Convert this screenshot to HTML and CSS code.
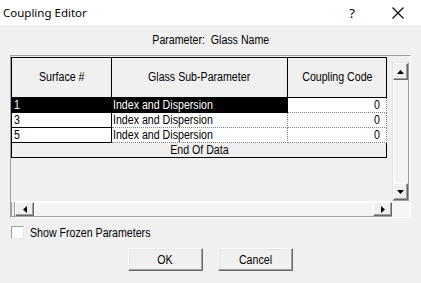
FILE: index.html
```html
<!DOCTYPE html>
<html>
<head>
<meta charset="utf-8">
<link rel="stylesheet" href="styles.css">
</head>
<body>
<div class="titlebar">
  <span class="title">Coupling Editor</span>
  <span class="help">?</span>
  <span class="close"><svg width="12" height="12" viewBox="0 0 12 12"><path d="M0.5 0.5 L11.5 11.5 M11.5 0.5 L0.5 11.5" stroke="#000" stroke-width="1.1" fill="none"/></svg></span>
</div>
<div class="body">
  <div class="param"><span class="t">Parameter:&nbsp; Glass Name</span></div>
  <div class="frame">
    <div class="gridarea">
      <div class="table">
        <div class="hdr c1"><span class="t">Surface #</span></div>
        <div class="hdr c2"><span class="t">Glass Sub-Parameter</span></div>
        <div class="hdr c3"><span class="t">Coupling Code</span></div>

        <div class="cell c1 sel"><span class="t l">1</span></div>
        <div class="cell c2 sel"><span class="t l">Index and Dispersion</span></div>
        <div class="cell c3 num"><span class="t r">0</span></div>

        <div class="cell c1"><span class="t l">3</span></div>
        <div class="cell c2"><span class="t l">Index and Dispersion</span></div>
        <div class="cell c3 num"><span class="t r">0</span></div>

        <div class="cell c1"><span class="t l">5</span></div>
        <div class="cell c2"><span class="t l">Index and Dispersion</span></div>
        <div class="cell c3 num"><span class="t r">0</span></div>

        <div class="end"><span class="t">End Of Data</span></div>
      </div>
    </div>
    <div class="vscroll">
      <div class="sbtn up"><svg width="7" height="4" viewBox="0 0 7 4"><path d="M3.5 0 L7 4 L0 4 Z" fill="#000"/></svg></div>
      <div class="track v"></div>
      <div class="sbtn down"><svg width="7" height="4" viewBox="0 0 7 4"><path d="M0 0 L7 0 L3.5 4 Z" fill="#000"/></svg></div>
    </div>
    <div class="hscroll">
      <div class="hleft"></div>
      <div class="sbtn left"><svg width="4" height="7" viewBox="0 0 4 7"><path d="M4 0 L4 7 L0 3.5 Z" fill="#000"/></svg></div>
      <div class="track h"></div>
      <div class="sbtn right"><svg width="4" height="7" viewBox="0 0 4 7"><path d="M0 0 L4 3.5 L0 7 Z" fill="#000"/></svg></div>
    </div>
    <div class="corner"></div>
  </div>
  <div class="check"><span class="box"></span><span class="t l">Show Frozen Parameters</span></div>
  <div class="buttons">
    <div class="btn"><span class="t">OK</span></div>
    <div class="btn"><span class="t">Cancel</span></div>
  </div>
</div>
</body>
</html>
```

FILE: styles.css
```css
* { box-sizing: border-box; }
html, body { margin: 0; padding: 0; }
body {
  width: 421px;
  height: 283px;
  overflow: hidden;
  background: #f0f0f0;
  font-family: "Liberation Sans", Arial, sans-serif;
  font-size: 12.5px;
  color: #000;
}
.t {
  display: inline-block;
  white-space: nowrap;
  transform: scaleX(0.85);
  transform-origin: center;
}
.t.l { transform-origin: left center; }
.t.r { transform-origin: right center; }
.titlebar {
  height: 25px;
  background: #fff;
  display: flex;
  align-items: center;
  font-family: "Noto Sans", "Open Sans", sans-serif;
  font-size: 11.5px;
}
.title { padding-left: 3px; flex: 1; }
.help { width: 14px; margin-right: 33px; text-align: center; font-size: 13px; }
.close { width: 12px; height: 12px; margin-right: 17px; display: flex; }
.body { padding: 0 0 0 10px; }
.param {
  height: 30px;
  line-height: 30px;
  text-align: center;
  padding-right: 10px;
}
.frame {
  width: 401px;
  height: 163px;
  border: 1px solid;
  border-color: #a0a0a0 #ffffff #ffffff #a0a0a0;
  box-shadow: inset 1px 1px 0 #f0f0f0;
  display: grid;
  grid-template-columns: 381px 18px;
  grid-template-rows: 145px 16px;
}
.gridarea { padding-top: 1px; overflow: hidden; }
.table {
  display: grid;
  grid-template-columns: 100px 176px 99px;
  grid-template-rows: 40px 15px 15px 15px 15px;
  width: 376px;
  border-left: 1px solid #000;
  border-top: 1px solid #000;
}
.hdr {
  border-right: 1px solid #000;
  border-bottom: 1px solid #000;
  display: flex;
  align-items: center;
  justify-content: center;
  background: #f0f0f0;
  padding-bottom: 1px;
}
.cell {
  background: #fff;
  line-height: 14px;
  white-space: nowrap;
  padding-left: 1px;
}
.cell.c1 { border-right: 1px solid #000; border-bottom: 1px solid #000; padding-left: 2px; }
.cell.c2, .cell.c3 { border-right: 1px dotted #808080; border-bottom: 1px dotted #808080; }
.cell.sel { background: #000; color: #fff; }
.cell.c1.sel { border-bottom-color: #000; }
.cell.c2.sel { border-right: 1px solid #000; border-bottom-color: #000; }
.num { text-align: right; padding-right: 6px; }
.end {
  grid-column: 1 / 4;
  border-right: 1px solid #000;
  border-bottom: 1px solid #000;
  text-align: center;
  line-height: 14px;
  background: #f0f0f0;
}
.vscroll {
  margin-top: 6px;
  width: 17px;
  display: flex;
  flex-direction: column;
  border: 1px solid;
  border-color: #e3e3e3 #a0a0a0 #a0a0a0 #e3e3e3;
}
.sbtn {
  background: #f0f0f0;
  border: 1px solid;
  border-color: #ffffff #696969 #696969 #ffffff;
  box-shadow: inset -1px -1px 0 #a0a0a0;
  display: flex;
  align-items: center;
  justify-content: center;
  flex: none;
}
.sbtn.up, .sbtn.down { height: 17px; }
.track.v { flex: 1; background: #f4f4f4; border-left: 1px solid #fff; }
.hscroll {
  display: flex;
  height: 16px;
  border-top: 1px solid #fff;
  border-bottom: 1px solid #a0a0a0;
}
.hleft { width: 4px; border-left: 1px solid #a0a0a0; border-right: 1px solid #a0a0a0; }
.sbtn.left, .sbtn.right { width: 19px; }
.track.h { flex: 1; background: #f4f4f4; border-top: 1px solid #fff; }
.corner { background: #f6f6f6; }
.check {
  display: flex;
  align-items: center;
  height: 15px;
  margin-top: 7px;
}
.box {
  width: 13px;
  height: 13px;
  background: #fff;
  border: 1px solid;
  border-color: #a0a0a0 #e3e3e3 #e3e3e3 #a0a0a0;
  margin-left: 1px;
  margin-right: 6px;
}
.buttons {
  display: flex;
  gap: 15px;
  padding-left: 118px;
  margin-top: 8px;
}
.btn {
  width: 75px;
  height: 23px;
  background: #f0f0f0;
  border: 1px solid;
  border-color: #ffffff #696969 #696969 #ffffff;
  box-shadow: inset -1px -1px 0 #a0a0a0, inset 1px 1px 0 #e3e3e3;
  display: flex;
  align-items: center;
  justify-content: center;
}
```
